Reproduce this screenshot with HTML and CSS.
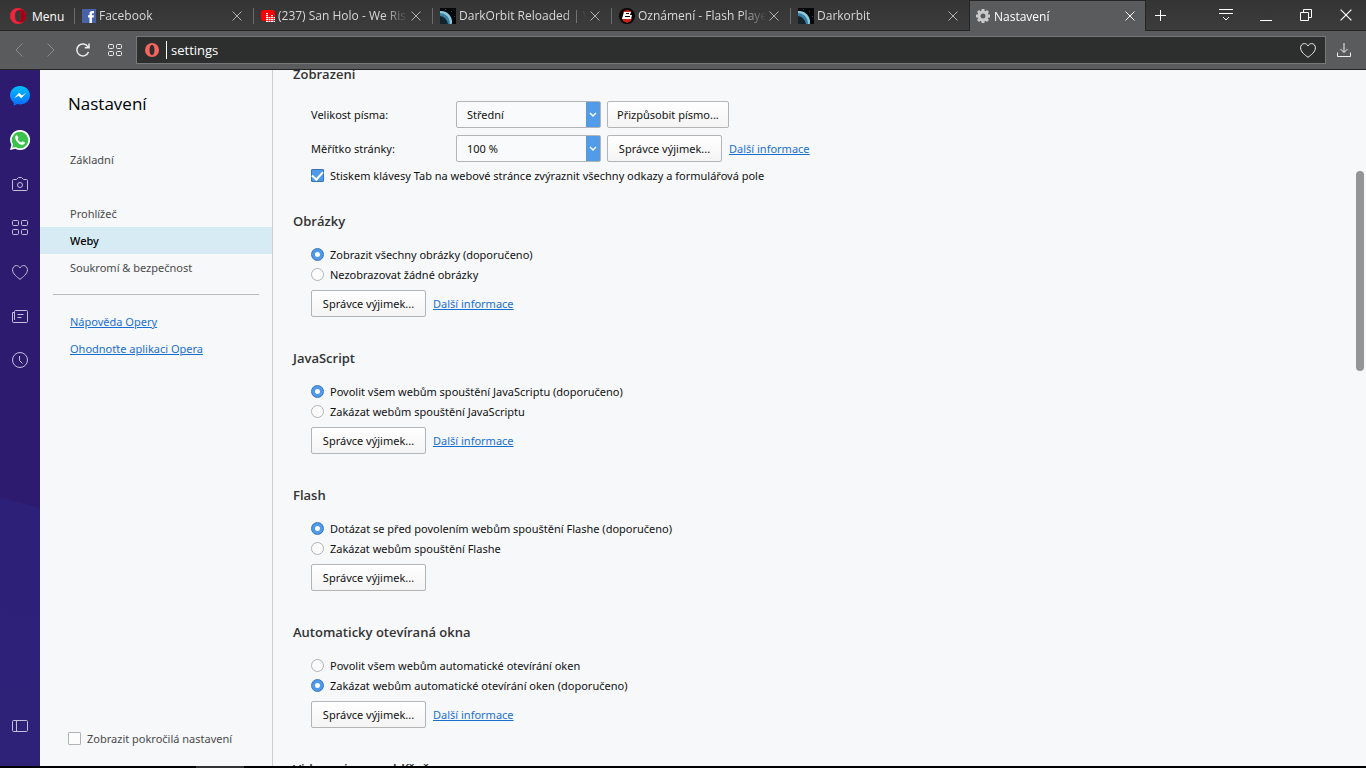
FILE: index.html
```html
<!DOCTYPE html>
<html lang="cs">
<head>
  <meta charset="UTF-8" />
  <meta name="viewport" content="width=device-width, initial-scale=1.0" />
  <title>Nastavení</title>
  <link rel="stylesheet" href="styles.css">
</head>
<body>
  <!-- shared icon shapes -->
  <svg class="defs" width="0" height="0" aria-hidden="true">
    <symbol id="close" viewBox="0 0 10 10"><path d="M.5.5l9 9M9.500.5l-9 9" /></symbol>
    <symbol id="tiles" viewBox="0 0 16 16">
      <rect x=".5" y=".5" width="6" height="5" rx="1" /><rect x="9.500" y=".5" width="6" height="5" rx="1" />
      <rect x=".5" y="9.500" width="6" height="5" rx="1" /><rect x="9.500" y="9.500" width="6" height="5" rx="1" />
    </symbol>
    <symbol id="heart" viewBox="0 0 16 15"><path d="M8 14.300C5 12 .6 9 .6 4.800.6 2.400 2.200.6 4.300.6 6 .6 7.300 1.500 8 3 8.700 1.500 10 .6 11.700.6c2.100 0 3.700 1.800 3.700 4.200C15.400 9 11 12 8 14.300z" /></symbol>
    <symbol id="chevron" viewBox="0 0 8 6"><path d="M1 1l3 3 3-3" /></symbol>
    <symbol id="planet" viewBox="0 0 16 16">
      <rect width="16" height="16" fill="#05070a" />
      <circle cx="1" cy="14" r="11" fill="#8ec9dd" />
      <circle cx="0" cy="15" r="10" fill="#3a7f9f" />
      <circle cx="-1" cy="17" r="9" fill="#14222b" />
      <path d="M5 1h1v1H5zM11 3h1v1h-1zM14 8h1v1h-1z" fill="#444" />
    </symbol>
  </svg>

  <header class="tabbar">
    <button class="menu" type="button">
      <svg width="16" height="16" viewBox="0 0 16 16"><path fill="#f5233a" fill-rule="evenodd" d="M8 0a8 8 0 100 16A8 8 0 008 0zm0 2.200c1.700 0 3 2.600 3 5.800s-1.300 5.800-3 5.800S5 11.200 5 8s1.300-5.800 3-5.800z" /><path fill="#a70014" d="M8 2.200c2-.9 3.500-.6 5.200-.3a8 8 0 010 12.200c-1.700.3-3.200.6-5.200-.3 1.700 0 3-2.600 3-5.800S9.700 2.200 8 2.200z" /></svg>
      Menu
    </button>
    <div class="tab">
      <svg width="14" height="14" viewBox="0 0 14 14"><rect width="14" height="14" fill="#4862a8" /><path fill="#fff" d="M7.500 14V8.500H6V6.300h1.500V4.700C7.500 3 8.500 2 10.200 2H12v2.200h-1.200c-.6 0-.9.300-.9.900v1.200H12l-.3 2.200H9.900V14z" /></svg>
      <span class="title">Facebook</span>
      <button type="button" aria-label="Zavřít"><svg class="x"><use href="#close" /></svg></button>
    </div>
    <div class="tab">
      <svg width="14" height="14" viewBox="0 0 14 14"><rect y="1" width="14" height="11" rx="3" fill="#f00" /><path stroke="#fff" stroke-width="2" stroke-dasharray="1.300 .7" fill="none" d="M6 13V4M8.500 13V8M11 13V6M13.500 13V8" /></svg>
      <span class="title">(237) San Holo - We Ris</span>
      <button type="button" aria-label="Zavřít"><svg class="x"><use href="#close" /></svg></button>
    </div>
    <div class="tab">
      <svg width="16" height="16"><use href="#planet" /></svg>
      <span class="title">DarkOrbit Reloaded | Ve</span>
      <button type="button" aria-label="Zavřít"><svg class="x"><use href="#close" /></svg></button>
    </div>
    <div class="tab">
      <svg width="16" height="16" viewBox="0 0 16 16"><circle cx="8" cy="8" r="8" fill="#080303" /><path fill="#c8261a" d="M3 10h10l-1 3-4 2-4-2zM5 3l3-1 4 1v2H4z" /><path fill="#fff" fill-rule="evenodd" d="M5 4h7l-1 3h2l-1 4H3l1-4zm2 1v1h3V5zM6 8v1h5V8z" /></svg>
      <span class="title">Oznámení - Flash Player</span>
      <button type="button" aria-label="Zavřít"><svg class="x"><use href="#close" /></svg></button>
    </div>
    <div class="tab">
      <svg width="16" height="16"><use href="#planet" /></svg>
      <span class="title">Darkorbit</span>
      <button type="button" aria-label="Zavřít"><svg class="x"><use href="#close" /></svg></button>
    </div>
    <div class="tab active">
      <svg width="14" height="14" viewBox="0 0 14 14"><circle cx="7" cy="7" r="4" fill="none" stroke="#c9cacb" stroke-width="3" /><path stroke="#c9cacb" stroke-width="3" d="M7 0v2.500M7 11.500V14M0 7h2.500M11.500 7H14M2 2l1.800 1.800M10.200 10.200L12 12M12 2l-1.800 1.800M3.800 10.200L2 12" /></svg>
      <span class="title">Nastavení</span>
      <button type="button" aria-label="Zavřít"><svg class="x"><use href="#close" /></svg></button>
    </div>
    <button class="new-tab" type="button" aria-label="Nová karta"><svg class="line" width="11" height="11" viewBox="0 0 11 11"><path d="M5.500 0v11M0 5.500h11" /></svg></button>
    <div class="window-buttons">
      <button type="button" aria-label="Nabídka karet"><svg class="line" width="14" height="12" viewBox="0 0 14 12"><path d="M0 .5h14M0 4.500h14M4 8l3 3 3-3" /></svg></button>
      <button type="button" aria-label="Minimalizovat"><svg class="line" width="12" height="12" viewBox="0 0 12 12"><path d="M0 11.500h12" /></svg></button>
      <button type="button" aria-label="Obnovit"><svg class="line" width="12" height="12" viewBox="0 0 12 12"><path d="M.5 3.500h8v8h-8zM3.500 3.500v-3h8v8h-3" /></svg></button>
      <button type="button" aria-label="Zavřít okno"><svg class="line" width="12" height="12"><use href="#close" /></svg></button>
    </div>
  </header>

  <div class="toolbar">
    <button type="button" class="dim" aria-label="Zpět"><svg class="line" width="8" height="14" viewBox="0 0 8 14"><path d="M7.500.5L1 7l6.500 6.500" /></svg></button>
    <button type="button" class="dim" aria-label="Vpřed"><svg class="line" width="8" height="14" viewBox="0 0 8 14"><path d="M.5.500L7 7 .5 13.500" /></svg></button>
    <button type="button" aria-label="Obnovit stránku"><svg class="line reload" width="14" height="14" viewBox="0 0 14 14"><path d="M12.500 9A6 6 0 1112 3.800M13 .5v4.300H8.700" /></svg></button>
    <button type="button" aria-label="Rychlá volba"><svg class="line" width="14" height="12" viewBox="0 0 14 12"><rect x=".5" y=".5" width="5" height="4" rx="1" /><rect x="8.500" y=".5" width="5" height="4" rx="1" /><rect x=".5" y="7.500" width="5" height="4" rx="1" /><rect x="8.500" y="7.500" width="5" height="4" rx="1" /></svg></button>
    <div class="address">
      <svg width="14" height="14" viewBox="0 0 14 14"><path fill="#f7665e" fill-rule="evenodd" d="M7 0a7 7 0 100 14A7 7 0 007 0zm0 1.800c1.500 0 2.500 2.300 2.500 5.200S8.500 12.200 7 12.200 4.500 9.900 4.500 7 5.500 1.800 7 1.800z" /></svg>
      <input type="text" value="settings" aria-label="Adresa">
      <button type="button" aria-label="Přidat do záložek"><svg class="line" width="16" height="15"><use href="#heart" /></svg></button>
    </div>
    <button type="button" class="download" aria-label="Stažené soubory"><svg class="line" width="14" height="14" viewBox="0 0 14 14"><path d="M7 0v9M3.500 6L7 9.500 10.500 6M.5 9.500v4h13v-4" /></svg></button>
  </div>

  <div class="window">
    <aside class="sidebar">
      <button type="button" aria-label="Messenger"><svg width="20" height="20" viewBox="0 0 20 20"><defs><linearGradient id="msg" x2="0" y2="1"><stop stop-color="#00c2ff" /><stop offset="1" stop-color="#0a66ff" /></linearGradient></defs><path fill="url(#msg)" d="M10 0C4.400 0 0 4.100 0 9.300c0 3 1.400 5.500 3.700 7.200V20l3.400-1.900c.9.300 1.900.4 2.900.4 5.600 0 10-4.100 10-9.200S15.600 0 10 0z" /><path fill="#fff" d="M4 12.300l5.200-5.500 2.700 2.600 4.500-2.600-5.200 5.500-2.600-2.600z" /></svg></button>
      <button type="button" aria-label="WhatsApp"><svg width="20" height="20" viewBox="0 0 20 20"><path fill="#fff" d="M0 20l1.400-5A10 10 0 1110 20c-1.700 0-3.300-.4-4.800-1.300z" /><path fill="#3cc24c" d="M2.200 17.800l.9-3.200A8.300 8.300 0 1110 18.300c-1.600 0-3-.4-4.300-1.300z" /><path fill="#fff" d="M6.900 5.300c-.8 0-1.900 1-1.700 2.400.5 3.500 4 6.900 7.200 7.100 1.500.1 2.600-.9 2.600-2.200l-2.500-1.400-1.200 1.300c-1.800-.8-3-2-3.700-3.600l1-1.200z" /></svg></button>
      <button type="button" aria-label="Snímek"><svg class="line" width="16" height="14" viewBox="0 0 16 14"><path d="M1.500 2.500h3l2-2h3l2 2h3q1 0 1 1v9q0 1-1 1h-13q-1 0-1-1v-9q0-1 1-1z" /><circle cx="8" cy="8" r="2.500" /></svg></button>
      <button type="button" aria-label="Rychlá volba"><svg class="line" width="16" height="16"><use href="#tiles" /></svg></button>
      <button type="button" aria-label="Záložky"><svg class="line" width="16" height="15"><use href="#heart" /></svg></button>
      <button type="button" aria-label="Osobní zprávy"><svg class="line" width="16" height="13" viewBox="0 0 16 13"><path d="M3.500.5h11q1 0 1 1v10q0 1-1 1h-13q-1 0-1-1v-9h2M2.500 10V1.500q0-1 1-1M5.500 4.500h6M5.500 7.500h4" /></svg></button>
      <button type="button" aria-label="Historie"><svg class="line" width="16" height="16" viewBox="0 0 16 16"><circle cx="8" cy="8" r="7.500" /><path d="M7.500 4v4.500l3 3" /></svg></button>
      <button type="button" class="panel-toggle" aria-label="Postranní panel"><svg class="line" width="16" height="12" viewBox="0 0 16 12"><rect x=".5" y=".5" width="15" height="11" rx="1" /><path d="M4.500.5v11" /></svg></button>
    </aside>

    <nav class="nav">
      <h1>Nastavení</h1>
      <ul>
        <li class="basic"><a href="#">Základní</a></li>
        <li><a href="#">Prohlížeč</a></li>
        <li class="selected"><a href="#">Weby</a></li>
        <li><a href="#">Soukromí &amp; bezpečnost</a></li>
      </ul>
      <hr>
      <ul class="links">
        <li><a href="#">Nápověda Opery</a></li>
        <li><a href="#">Ohodnoťte aplikaci Opera</a></li>
      </ul>
      <label class="option advanced"><input type="checkbox">Zobrazit pokročilá nastavení</label>
    </nav>

    <main class="content">
      <section class="display">
        <h2>Zobrazení</h2>
        <div class="body">
          <div class="field">
            <label for="fontSize">Velikost písma:</label>
            <span class="select"><select id="fontSize"><option>Střední</option></select><svg><use href="#chevron" /></svg></span>
            <button type="button" class="btn">Přizpůsobit písmo...</button>
          </div>
          <div class="field">
            <label for="zoom">Měřítko stránky:</label>
            <span class="select"><select id="zoom"><option>100 %</option></select><svg><use href="#chevron" /></svg></span>
            <button type="button" class="btn">Správce výjimek...</button>
            <a href="#">Další informace</a>
          </div>
          <label class="option"><input type="checkbox" checked>Stiskem klávesy Tab na webové stránce zvýraznit všechny odkazy a formulářová pole</label>
        </div>
      </section>

      <section>
        <h2>Obrázky</h2>
        <div class="body">
          <label class="option"><input type="radio" name="images" checked>Zobrazit všechny obrázky (doporučeno)</label>
          <label class="option"><input type="radio" name="images">Nezobrazovat žádné obrázky</label>
          <div class="actions"><button type="button" class="btn">Správce výjimek...</button><a href="#">Další informace</a></div>
        </div>
      </section>

      <section>
        <h2>JavaScript</h2>
        <div class="body">
          <label class="option"><input type="radio" name="js" checked>Povolit všem webům spouštění JavaScriptu (doporučeno)</label>
          <label class="option"><input type="radio" name="js">Zakázat webům spouštění JavaScriptu</label>
          <div class="actions"><button type="button" class="btn">Správce výjimek...</button><a href="#">Další informace</a></div>
        </div>
      </section>

      <section>
        <h2>Flash</h2>
        <div class="body">
          <label class="option"><input type="radio" name="flash" checked>Dotázat se před povolením webům spouštění Flashe (doporučeno)</label>
          <label class="option"><input type="radio" name="flash">Zakázat webům spouštění Flashe</label>
          <div class="actions"><button type="button" class="btn">Správce výjimek...</button></div>
        </div>
      </section>

      <section>
        <h2>Automaticky otevíraná okna</h2>
        <div class="body">
          <label class="option"><input type="radio" name="popups">Povolit všem webům automatické otevírání oken</label>
          <label class="option"><input type="radio" name="popups" checked>Zakázat webům automatické otevírání oken (doporučeno)</label>
          <div class="actions"><button type="button" class="btn">Správce výjimek...</button><a href="#">Další informace</a></div>
        </div>
      </section>

      <section>
        <h2>Video mimo prohlížeč</h2>
      </section>
      <div class="scroll-thumb"></div>
    </main>
  </div>
  <div class="taskbar"><span></span></div>
</body>
</html>
```
FILE: styles.css
```css
* {
  box-sizing: border-box;
}

body {
  margin: 0;
  height: 100vh;
  display: flex;
  flex-direction: column;
  overflow: hidden;
  font-family: "Segoe UI", "Noto Sans", sans-serif;
  font-size: 11px;
  color: #111;
  background: #f6f8fa;
}

button, input, select {
  font: inherit;
  color: inherit;
}

button {
  padding: 0;
  border: none;
  background: none;
}

svg {
  display: block;
  flex: none;
}

.defs {
  position: absolute;
}

.line, .x {
  fill: none;
  stroke: currentColor;
}

.reload {
  stroke-width: 1.5;
}

.tabbar, .toolbar, h1, h2 {
  font-family: "Segoe UI", "Open Sans", sans-serif;
}

/* tabs */
.tabbar {
  display: flex;
  height: 31px;
  background: linear-gradient(#343434, #3c3c3c);
  border-bottom: 1px solid #262626;
  color: #d8d8d8;
}

.menu {
  display: flex;
  align-items: center;
  gap: 6px;
  width: 74px;
  padding: 2px 0 0 10px;
  font-size: 12px;
  color: #fff;
}

.tab {
  display: flex;
  align-items: center;
  gap: 3px;
  flex: 0 1 179px;
  min-width: 0;
  padding: 1px 11px 0 8px;
  background: linear-gradient(#6a6a6a, #6a6a6a) 0 8px / 1px 16px no-repeat;
}

.title {
  flex: 1;
  overflow: hidden;
  white-space: nowrap;
  font-size: 12px;
  -webkit-mask-image: linear-gradient(to left, transparent, #000 24px);
  mask-image: linear-gradient(to left, transparent, #000 24px);
}

.x {
  width: 10px;
  height: 10px;
  color: #b0b0b0;
}

.active {
  flex-basis: 177px;
  height: 31px;
  gap: 4px;
  padding: 0 10px 0 6px;
  background: #5a5b5d;
  border: 1px solid #262626;
  border-bottom: none;
  color: #fff;
}

.active .x {
  color: #fff;
}

.new-tab {
  display: flex;
  align-items: center;
  padding: 1px 9px 0;
}

.window-buttons {
  display: flex;
  margin-left: auto;
}

.window-buttons button {
  width: 40px;
  display: grid;
  place-items: center;
}

.window-buttons, .new-tab {
  color: #fff;
}

/* address bar */
.toolbar {
  display: flex;
  align-items: center;
  height: 39px;
  padding: 0 5px 0 3px;
  background: #5a5b5d;
  border-bottom: 1px solid #262626;
  color: #eee;
}

.toolbar button {
  width: 32px;
  height: 28px;
  display: grid;
  place-items: center;
}

.toolbar .dim {
  color: #8b8c8e;
}

.toolbar .download {
  width: 35px;
}

.address {
  flex: 1;
  display: flex;
  align-items: center;
  height: 28px;
  margin-left: 5px;
  padding-left: 8px;
  background: #2d2f2f;
  border: 1px solid #77787a;
}

.address input {
  flex: 1;
  min-width: 0;
  height: 18px;
  margin-left: 7px;
  padding: 0 0 0 4px;
  border: none;
  border-left: 1px solid #fff;
  background: none;
  color: #fff;
  font-size: 13px;
}

.address button {
  width: 35px;
}

.window {
  flex: 1;
  min-height: 0;
  display: flex;
}

.sidebar {
  width: 40px;
  display: flex;
  flex-direction: column;
  padding-top: 4px;
  background: linear-gradient(195deg, #2c1b6e 62%, #2c2079 62%, #2d2178);
  color: #c5bfdc;
}

.sidebar button {
  height: 44px;
  display: grid;
  place-items: center;
}

.sidebar .panel-toggle {
  margin: auto 0 18px;
}

/* settings navigation */
.nav {
  width: 233px;
  display: flex;
  flex-direction: column;
  border-right: 1px solid #ccced0;
  color: #4a4a4a;
}

.nav h1 {
  margin: 20px 28px 29px;
  font-size: 17px;
  line-height: 27px;
  font-weight: normal;
  color: #000;
}

.nav ul {
  margin: 0;
  padding: 0;
  list-style: none;
}

.nav li {
  padding-left: 30px;
  line-height: 27px;
}

.nav li a {
  color: inherit;
  text-decoration: none;
}

.nav .basic {
  margin-bottom: 27px;
}

.nav .selected {
  background: #d6ebf4;
  color: #000;
  font-weight: 500;
}

.nav hr {
  width: 206px;
  margin: 13px auto;
  border: none;
  border-top: 1px solid #b8babc;
}

.nav .links a, .content a {
  color: #1a6fce;
  text-decoration: underline;
}

.nav .advanced {
  margin: auto 0 18px 28px;
}

/* settings content */
.content {
  position: relative;
  flex: 1;
  min-width: 0;
  padding-left: 20px;
  overflow: hidden;
}

section {
  margin-bottom: 31px;
}

.display {
  margin: -6px 0 26px;
}

h2 {
  margin: 0 0 13px;
  font-size: 13px;
  line-height: 20px;
  font-weight: 600;
  color: #333;
}

.display h2 {
  margin-bottom: 17px;
}

.body {
  padding-left: 18px;
}

.field {
  display: flex;
  align-items: center;
  margin-bottom: 7px;
}

.field label {
  width: 145px;
}

.field + .option {
  margin-top: -4px;
}

.select {
  position: relative;
  width: 145px;
  margin-right: 6px;
}

.select select {
  display: block;
  width: 100%;
  height: 27px;
  padding: 0 20px 0 10px;
  appearance: none;
  border: 1px solid #b2b4b6;
  border-radius: 2px;
  background: linear-gradient(#529be6, #529be6) right / 14px 100% no-repeat #f9fafb;
}

.select svg {
  position: absolute;
  right: 4px;
  top: 11px;
  width: 8px;
  height: 6px;
  fill: none;
  stroke: #fff;
  stroke-width: 1.5;
}

.btn {
  min-width: 115px;
  height: 27px;
  padding: 0 9px;
  margin-right: 7px;
  border: 1px solid #b2b4b6;
  border-radius: 2px;
  background: linear-gradient(#fff, #f4f4f4);
}

.option {
  display: flex;
  align-items: center;
  gap: 6px;
  height: 20px;
}

.option input {
  appearance: none;
  width: 13px;
  height: 13px;
  margin: 0;
  border: 1px solid #b0b2b4;
  border-radius: 1px;
  background: #fcfcfc;
}

.option input[type="radio"] {
  border-radius: 50%;
}

.option input[type="radio"]:checked {
  border-color: #3a74b4;
  background: radial-gradient(circle, #fff 2px, #4f9aea 3px);
}

.option input[type="checkbox"]:checked {
  display: grid;
  place-items: center;
  border-color: #3a74b4;
  background: #4f9aea;
}

.option input[type="checkbox"]:checked::before {
  content: "";
  width: 9px;
  height: 5px;
  margin-top: -2px;
  border-left: 2px solid #fff;
  border-bottom: 2px solid #fff;
  transform: rotate(-48deg);
}

.actions {
  display: flex;
  align-items: center;
  margin-top: 6px;
}

.scroll-thumb {
  position: absolute;
  top: 101px;
  right: 2px;
  width: 8px;
  height: 200px;
  border-radius: 4px;
  background: #939694;
}

/* strip of the system taskbar */
.taskbar {
  height: 2px;
  background: #000;
}

.taskbar span {
  display: block;
  width: 48px;
  height: 2px;
  margin-left: 196px;
  background: #333;
}
```
